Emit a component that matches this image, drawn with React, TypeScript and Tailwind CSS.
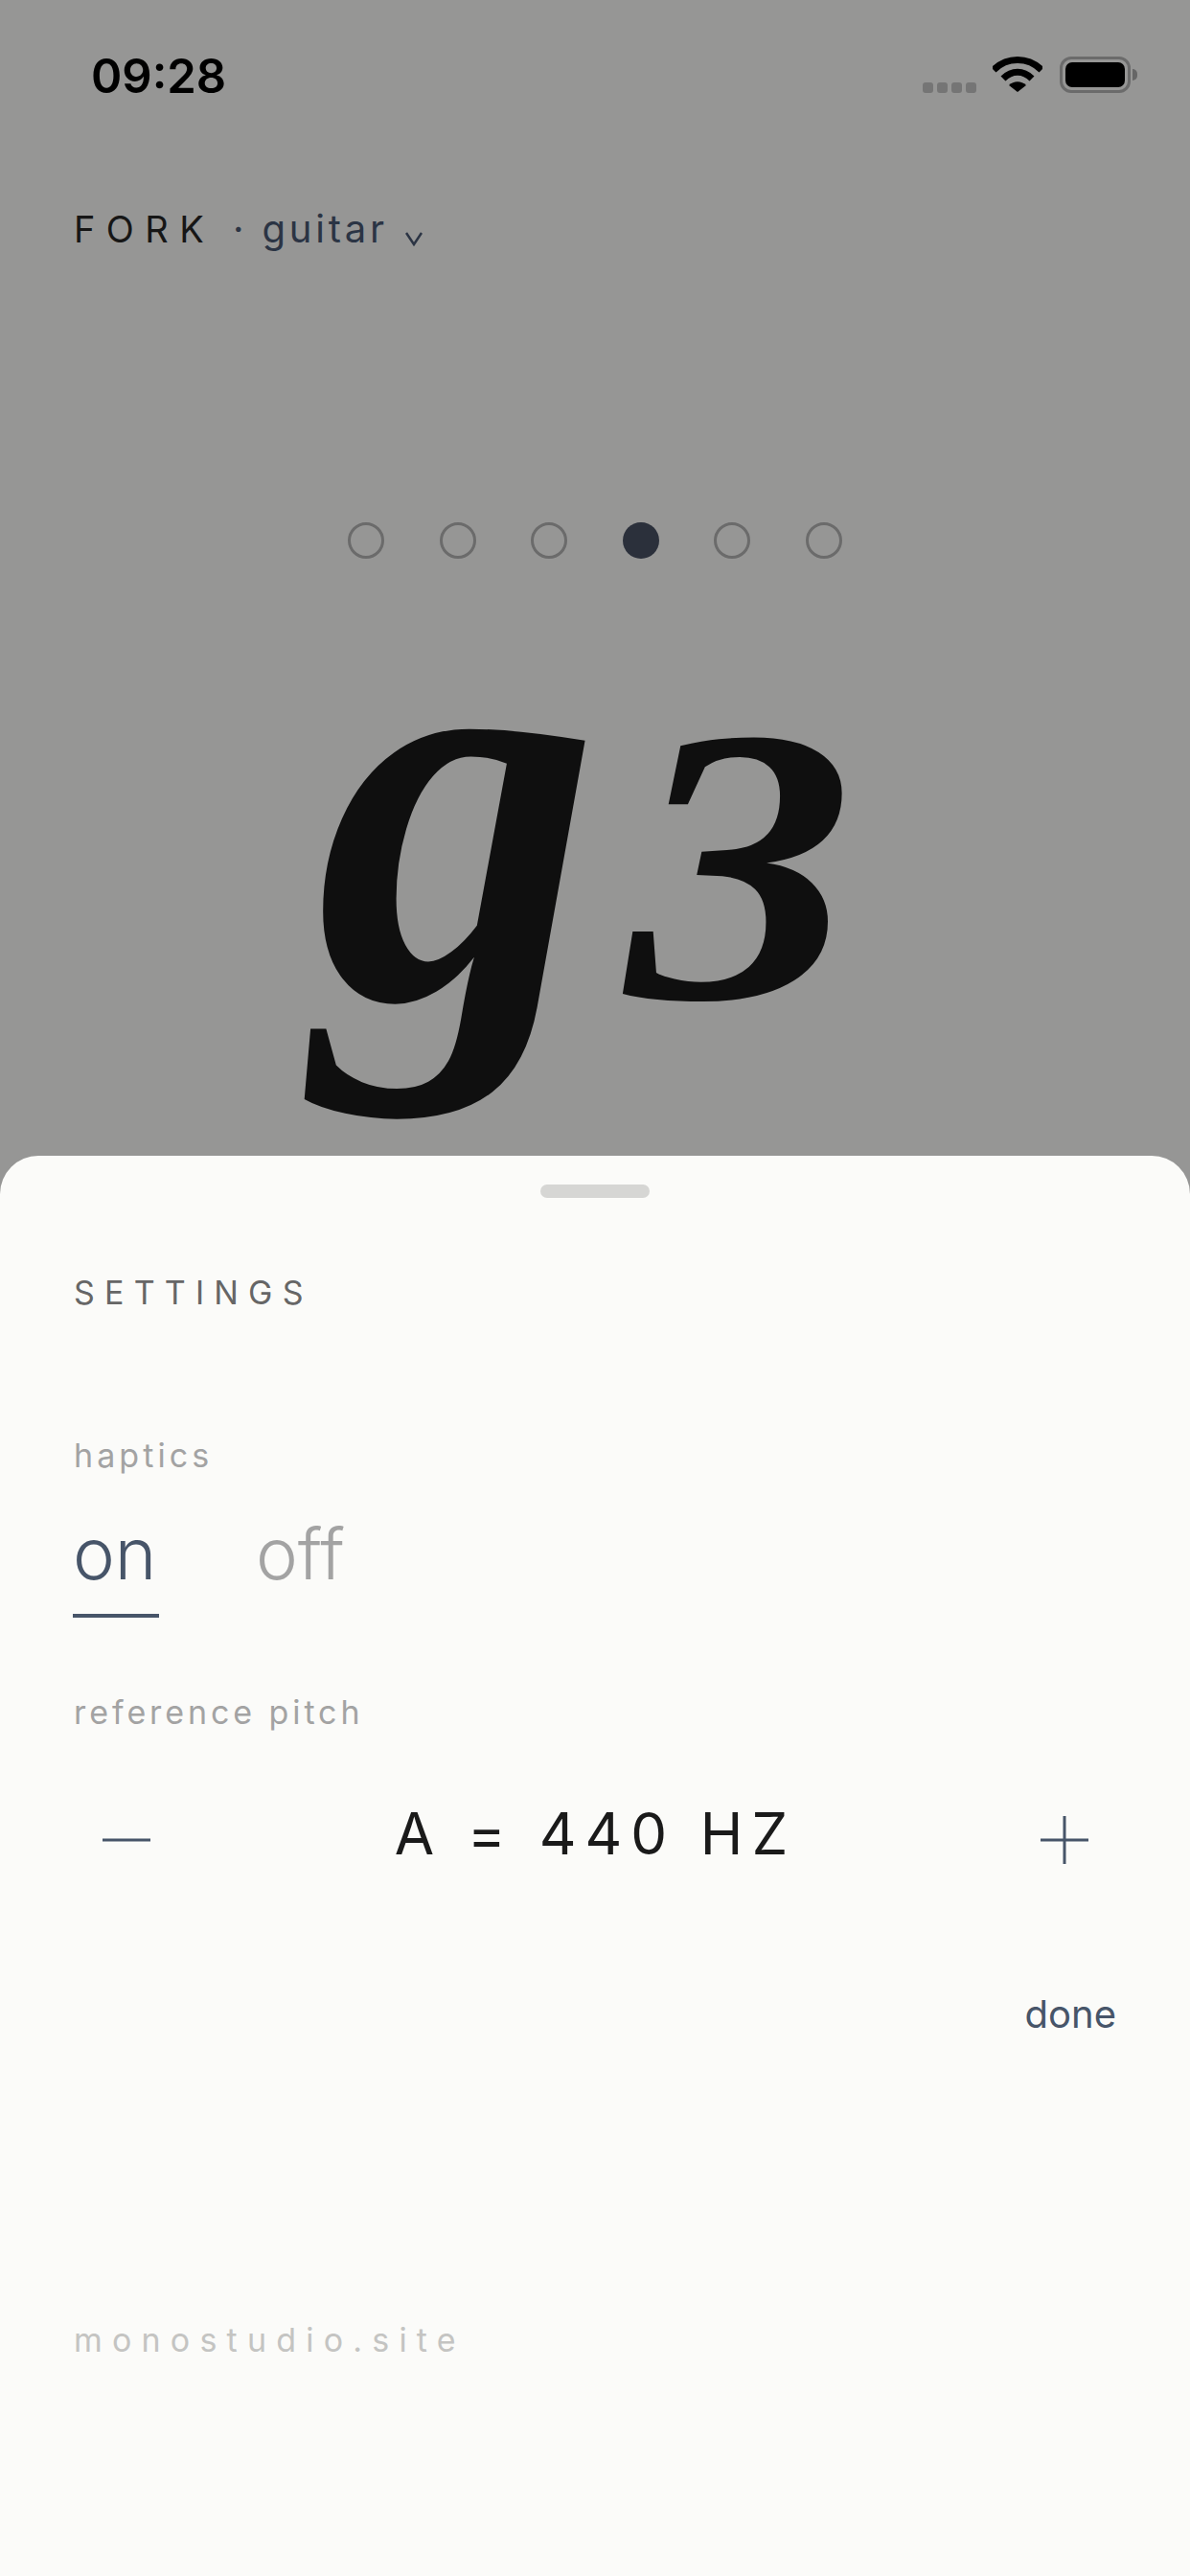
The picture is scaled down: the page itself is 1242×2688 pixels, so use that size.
const strings = ["e", "a", "d", "g", "b", "e"];

function StatusBar() {
  return (
    <div className="flex h-[100px] items-start justify-between pl-[95px] pr-[55px] pt-[50px]">
      <span className="text-[49px] leading-[59px] font-semibold text-black">09:28</span>
      <div className="flex items-center pt-[9px]">
        <div className="mr-[17px] mt-[27px] flex gap-[4px]">
          <div className="size-[11px] rounded-[3px] bg-[#757575]" />
          <div className="size-[11px] rounded-[3px] bg-[#757575]" />
          <div className="size-[11px] rounded-[3px] bg-[#757575]" />
          <div className="size-[11px] rounded-[3px] bg-[#757575]" />
        </div>
        <svg width="52" height="38" viewBox="0 0 52 38" className="mr-[18px]">
          <path d="M1 14 C15 0 37 0 51 14" fill="none" stroke="#000" strokeWidth="7" />
          <path d="M11 23 C20 14 32 14 41 23" fill="none" stroke="#000" strokeWidth="7" />
          <path d="M26 37 L17 30 C22 25 30 25 35 30 Z" fill="#000" />
        </svg>
        <div className="flex items-center">
          <div className="flex h-[38px] w-[74px] rounded-[12px] border-[3px] border-[#6b6b6b] p-[3px]">
            <div className="flex-1 rounded-[7px] bg-black" />
          </div>
          <div className="ml-[2px] h-[12px] w-[5px] rounded-r-full bg-[#666]" />
        </div>
      </div>
    </div>
  );
}

function Dots() {
  return (
    <div className="mt-[283px] flex justify-center gap-[57.5px]">
      {strings.map((s, i) =>
        i === 3 ? (
          <div key={i} className="size-[38px] rounded-full bg-[#2b303b]" />
        ) : (
          <div key={i} className="size-[38px] rounded-full border-[3px] border-[#6b6b6b]" />
        )
      )}
    </div>
  );
}

export default function App() {
  return (
    <div className="flex h-[2688px] w-[1242px] flex-col overflow-hidden bg-[#969695] font-['Inter',sans-serif]">
      <div className="h-[1206px] shrink-0 overflow-hidden">
        <StatusBar />
        {/* Header */}
        <div className="mt-[116px] flex items-baseline pl-[77px]">
          <span className="text-[38px] leading-[46px] tracking-[0.3em] text-[#161616]">FORK</span>
          <span className="ml-[19px] text-[40px] leading-[46px] tracking-[0.095em] text-[#2b3444]">· guitar</span>
          <svg width="18" height="16" viewBox="0 0 18 16" className="ml-[18px] translate-y-[4px]">
            <path d="M1 2 L9 14 L17 2" fill="none" stroke="#2b3444" strokeWidth="2.5" />
          </svg>
        </div>
        <Dots />
        {/* Current note */}
        <div className="mt-[43px] flex items-baseline justify-center gap-[44px] pr-[38px] font-['Liberation_Serif',serif] font-bold italic text-[#0f0f0f]">
          <span className="text-[595px] leading-[430px]">g</span>
          <span className="scale-x-[1.16] text-[410px] leading-[430px]">3</span>
        </div>
      </div>

      {/* Settings sheet */}
      <div className="flex flex-1 flex-col rounded-t-[40px] bg-[#fbfbf9] px-[76px] pt-[30px]">
        <div className="mx-auto h-[14px] w-[114px] rounded-full bg-[#d6d6d4]" />
        <div className="mt-[79px] pl-[1px] text-[34px] leading-[40px] tracking-[0.3em] text-[#666]">SETTINGS</div>
        <div className="mt-[130px] pl-[1px] text-[34px] leading-[40px] tracking-[0.12em] text-[#a3a3a3]">haptics</div>
        <div className="mt-[32px] flex gap-[101px]">
          <div className="w-[90px] border-b-[4px] border-[#475569] pb-[13px] text-[74px] leading-[100px] font-light text-[#475569]">on</div>
          <div className="text-[74px] leading-[100px] font-light text-[#a3a3a3]">off</div>
        </div>
        <div className="mt-[79px] pl-[1px] text-[34px] leading-[40px] tracking-[0.115em] text-[#a3a3a3]">reference pitch</div>
        <div className="mt-[70px] flex items-start justify-between pl-[31px] pr-[30px]">
          <svg width="50" height="52" viewBox="0 0 50 52" className="mt-[17px]">
            <path d="M0 26 H50" stroke="#475569" strokeWidth="3" />
          </svg>
          <span className="text-[60px] leading-[72px] tracking-[0.15em] text-[#1a1a1a]">A = 440 HZ</span>
          <svg width="50" height="52" viewBox="0 0 50 52" className="mt-[17px]">
            <path d="M0 26 H50 M25 1 V51" stroke="#475569" strokeWidth="3" />
          </svg>
        </div>
        <div className="mt-[129px] pr-[1px] text-right text-[40px] leading-[48px] text-[#475569]">done</div>
        <div className="mt-[296px] pl-[1px] text-[34px] leading-[40px] tracking-[0.3em] text-[#c4c4c2]">monostudio.site</div>
      </div>
    </div>
  );
}
